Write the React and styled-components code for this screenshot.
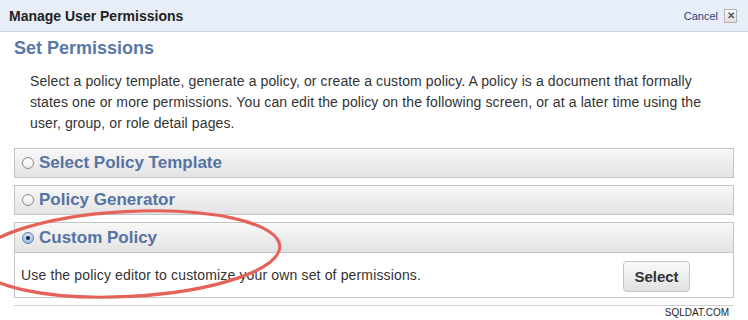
import React from "react";
import styled, { createGlobalStyle } from "styled-components";

const GlobalStyle = createGlobalStyle`
  *, *::before, *::after {
    box-sizing: border-box;
  }
  html, body {
    margin: 0;
    padding: 0;
    background: #fff;
  }
  body {
    font-family: "Liberation Sans", Arial, sans-serif;
    color: #333;
  }
`;

const sections = [
  { id: "template", title: "Select Policy Template" },
  { id: "generator", title: "Policy Generator" },
  {
    id: "custom",
    title: "Custom Policy",
    body: "Use the policy editor to customize your own set of permissions.",
  },
];

const introLines = [
  "Select a policy template, generate a policy, or create a custom policy. A policy is a document that formally",
  "states one or more permissions. You can edit the policy on the following screen, or at a later time using the",
  "user, group, or role detail pages.",
];

const App = () => {
  const selected = "custom";

  return (
    <S_Dialog>
      <GlobalStyle />
      <S_TitleBar>
        <h1>Manage User Permissions</h1>
        <S_Cancel href="#">
          Cancel
          <span className="close">&#x2715;</span>
        </S_Cancel>
      </S_TitleBar>

      <S_Content>
        <S_Heading>Set Permissions</S_Heading>
        <S_Intro>
          {introLines.map((line) => (
            <span key={line}>{line}</span>
          ))}
        </S_Intro>

        <S_Options>
          {sections.map((s) => (
            <S_Option key={s.id}>
              <S_OptionHeader $open={s.id === selected && !!s.body}>
                <S_Radio $checked={s.id === selected} />
                {s.title}
              </S_OptionHeader>
              {s.id === selected && s.body && (
                <S_OptionBody>
                  <span>{s.body}</span>
                  <S_Button>Select</S_Button>
                </S_OptionBody>
              )}
            </S_Option>
          ))}
        </S_Options>

        <S_Footer>SQLDAT.COM</S_Footer>
      </S_Content>

      <S_Annotation width="748" height="320" viewBox="0 0 748 320">
        <ellipse
          cx="128"
          cy="254"
          rx="152"
          ry="42.5"
          transform="rotate(-3 128 254)"
          fill="none"
          stroke="#e4625a"
          strokeWidth="3.2"
        />
      </S_Annotation>
    </S_Dialog>
  );
};

export default App;

const S_Dialog = styled.div`
  position: relative;
  width: 748px;
  height: 320px;
  overflow: hidden;
  background: #fff;
`;

const S_TitleBar = styled.div`
  display: flex;
  align-items: center;
  justify-content: space-between;
  height: 32px;
  padding: 0 11px 0 9px;
  background: #e7eef8;
  border-bottom: 1px solid #c4d3e6;

  h1 {
    margin: 0;
    font-size: 14px;
    font-weight: bold;
    color: #222;
  }
`;

const S_Cancel = styled.a`
  display: flex;
  align-items: center;
  gap: 6px;
  font-size: 11px;
  color: #24447e;
  text-decoration: none;

  .close {
    display: flex;
    align-items: center;
    justify-content: center;
    width: 13px;
    height: 14px;
    border: 1px solid #b4b4b4;
    background: linear-gradient(#fbfbfb, #e0e0e0);
    font-size: 10px;
    font-weight: bold;
    color: #555;
  }
`;

const S_Content = styled.div`
  padding: 6px 14px 0;
`;

const S_Heading = styled.h2`
  margin: 0;
  font-size: 18px;
  line-height: 21px;
  font-weight: bold;
  color: #5878a8;
`;

const S_Intro = styled.p`
  display: flex;
  flex-direction: column;
  margin: 12px 0 14px 16px;
  font-size: 14px;
  line-height: 21px;
  letter-spacing: 0.11px;
  white-space: nowrap;
  color: #333;
`;

const S_Options = styled.div`
  display: flex;
  flex-direction: column;
  gap: 7px;
`;

const S_Option = styled.div`
  display: flex;
  flex-direction: column;
`;

const S_OptionHeader = styled.div`
  display: flex;
  align-items: center;
  gap: 5px;
  height: ${(p) => (p.$open ? "31px" : "30px")};
  padding-left: 7px;
  border: 1px solid #c4c4c4;
  background: linear-gradient(#f8f8f8, #e3e3e3);
  font-size: 17px;
  font-weight: bold;
  color: #5673a3;
`;

const S_Radio = styled.span`
  position: relative;
  flex: none;
  width: 12px;
  height: 12px;
  border-radius: 50%;
  border: 1px solid ${(p) => (p.$checked ? "#5c7fb0" : "#8a8a8a")};
  background: ${(p) =>
    p.$checked ? "linear-gradient(#d3e3f5, #9dbde4)" : "linear-gradient(#ffffff, #ececec)"};

  &::after {
    content: "";
    display: ${(p) => (p.$checked ? "block" : "none")};
    position: absolute;
    left: 3px;
    top: 3px;
    width: 4px;
    height: 4px;
    border-radius: 50%;
    background: #1d2a3c;
  }
`;

const S_OptionBody = styled.div`
  display: flex;
  align-items: center;
  justify-content: space-between;
  height: 45px;
  padding: 0 43px 0 6px;
  border: 1px solid #c4c4c4;
  border-top: none;
  font-size: 14px;
  letter-spacing: 0.15px;
  color: #333;
`;

const S_Button = styled.button`
  width: 67px;
  height: 31px;
  margin-top: 2px;
  border: 1px solid #c6c6c6;
  border-radius: 4px;
  background: linear-gradient(#fafafa, #e1e1e1);
  font-family: "Liberation Sans", Arial, sans-serif;
  font-size: 15px;
  font-weight: bold;
  color: #333;
`;

const S_Footer = styled.div`
  margin-top: 7px;
  padding: 1px 5px 0 0;
  border-top: 1px solid #cfcfcf;
  text-align: right;
  font-size: 10px;
  color: #222;
`;

const S_Annotation = styled.svg`
  position: absolute;
  left: 0;
  top: 0;
  pointer-events: none;
`;
